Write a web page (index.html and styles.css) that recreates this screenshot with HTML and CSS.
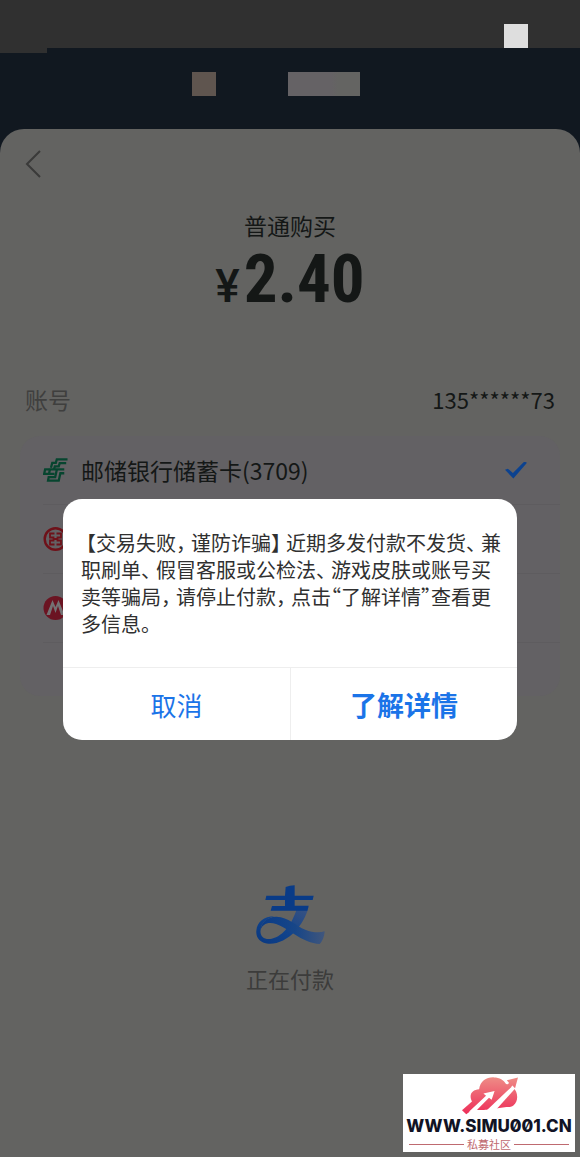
FILE: index.html
```html
<!DOCTYPE html>
<html lang="zh-CN">
<head>
<meta charset="utf-8">
<meta name="viewport" content="width=device-width, initial-scale=1">
<title>付款</title>
<link rel="stylesheet" href="styles.css">
</head>
<body>
<div class="screen">
  <div class="status"><span class="block block-light"></span></div>
  <div class="behind">
    <span class="notch"></span>
    <span class="block block-brown"></span>
    <span class="block block-gray"></span>
  </div>
  <main class="sheet">
    <button class="back" type="button" aria-label="返回">
      <svg viewBox="0 0 16 28" width="16" height="28"><path d="M15 1 2 14 15 27" fill="none" stroke="currentColor" stroke-width="2"/></svg>
    </button>
    <h1 class="title">普通购买</h1>
    <p class="amount"><span class="currency">¥</span>2.40</p>
    <div class="account"><span class="account-label">账号</span><span>135******73</span></div>
    <div class="cards">
      <label class="card">
        <svg class="bank" viewBox="21 24 76 74">
          <g fill="none" stroke="#07452f" stroke-width="7">
            <path d="M96 28H63L60 39H49L45 54"/>
            <path d="M92 40H72L69 50H57L54 60"/>
            <path d="M42 73H24L27 59H86"/>
            <path d="M86 71H74L69 94H36L38 83H58L63 60"/>
            <path d="M42 58 39 73H56"/>
          </g>
        </svg>
        <span class="card-name">邮储银行储蓄卡(3709)</span>
        <input class="check" type="radio" name="card" checked>
      </label>
      <label class="card">
        <svg class="bank" viewBox="0 0 24 24">
          <circle cx="12" cy="12" r="10.8" fill="none" stroke="#6e1119" stroke-width="2.4"/>
          <path d="M11 6.500H6.500V10.500H10V13.500H6.500V17.500H11M13 6.500H17.500V10.500H14V13.500H17.500V17.500H13M10 12H14" fill="none" stroke="#6e1119" stroke-width="1.8"/>
        </svg>
        <input class="check" type="radio" name="card">
      </label>
      <label class="card">
        <svg class="bank" viewBox="0 0 24 24">
          <circle cx="12" cy="12" r="12" fill="#6b1422"/>
          <path d="M3 19 9 4 12 11 15 4 21 19H17.500L14.500 10 12 17 9.500 10 6.500 19Z" fill="#747274"/>
        </svg>
        <input class="check" type="radio" name="card">
      </label>
    </div>
    <div class="paying">
      <svg class="pay-logo" viewBox="44 43 207 180">
        <defs>
          <linearGradient id="leg" x1="1" y1="0" x2="0" y2="1"><stop offset="0" stop-color="#3c5480"/><stop offset=".55" stop-color="#11438c"/><stop offset="1" stop-color="#093880"/></linearGradient>
          <linearGradient id="tail" x1="0" y1="0" x2="1" y2="0"><stop offset="0" stop-color="#093b87"/><stop offset=".55" stop-color="#174688"/><stop offset="1" stop-color="#40567c"/></linearGradient>
        </defs>
        <path d="M165 108H202C194 138 181 160 162 181C138 207 108 221 81 219C56 217 43 202 45 180C47 154 68 137 99 137C81 142 62 153 58 174C54 197 68 208 91 204C128 197 153 155 165 119Z" fill="url(#leg)"/>
        <path d="M56 183C58 157 78 137 106 138C141 139 164 166 192 177C213 186 235 187 250 182C249 198 243 213 235 220C211 219 184 207 158 190C130 171 91 145 68 163C61 168 58 175 56 183Z" fill="url(#tail)"/>
        <path d="M75 75H131L133 49Q145 44 160 44V75H217L214 88H160V105H202L198 120H88L92 106H131V88H72Z" fill="#093b87"/>
      </svg>
      <p class="paying-text">正在付款</p>
    </div>
  </main>

  <div class="overlay">
    <section class="dialog" role="dialog" aria-modal="true">
      <p class="message"><span class="open">【</span>交易失败<span class="mark">，</span>谨防诈骗<span class="mark">】</span>近期多发付款不发货<span class="mark">、</span>兼职刷单<span class="mark">、</span>假冒客服或公检法<span class="mark">、</span>游戏皮肤或账号买卖等骗局<span class="mark">，</span>请停止付款<span class="mark">，</span>点击<span class="quote">“</span>了解详情<span class="quote">”</span>查看更多信息。</p>
      <div class="actions">
        <button class="action" type="button">取消</button>
        <button class="action action-main" type="button">了解详情</button>
      </div>
    </section>
  </div>

  <aside class="badge">
    <svg class="cloud" viewBox="192 33 176 116">
      <defs><linearGradient id="pink" gradientUnits="userSpaceOnUse" x1="0" y1="36" x2="0" y2="145"><stop offset="0" stop-color="#ee8c86"/><stop offset="1" stop-color="#ee305a"/></linearGradient></defs>
      <path d="M228 113C213 91 224 73 247 72C250 48 269 35 292 36C309 36 322 44 328 55L350 66C367 82 366 110 351 121C345 125 338 126 330 126L270 134H238Z" fill="url(#pink)"/>
      <path d="M195 136 240 96 272 88 276 98 208 148Z" fill="url(#pink)"/>
      <path d="M268 138 348 62 357 69 301 131 294 138Z" fill="#fff"/>
      <path d="M331 45 365 36 356 69 348 61 262 135H240L338 53Z" fill="url(#pink)"/>
      <path d="M260 85 294 77 285 104 277 98 235 140H216L268 92Z" fill="#fff"/>
    </svg>
    <strong class="site">WWW.SIMU001.CN</strong>
    <span class="community">私募社区</span>
  </aside>
</div>
</body>
</html>
```

FILE: styles.css
```css
* { box-sizing: border-box; }

body {
  margin: 0;
  background: #111820;
  color: #141716;
  font-family: "Noto Sans CJK SC", sans-serif;
}

h1, p { margin: 0; font-weight: 400; }

button {
  padding: 0;
  border: 0;
  background: none;
  font: inherit;
  cursor: pointer;
}

.screen {
  position: relative;
  display: flex;
  flex-direction: column;
  min-height: 100vh;
}

.status {
  display: flex;
  justify-content: flex-end;
  align-items: flex-end;
  height: 48px;
  padding-right: 52px;
  background: #303030;
}

.behind {
  position: relative;
  display: flex;
  justify-content: center;
  gap: 72px;
  height: 81px;
  padding: 24px 28px 0 0;
}

.notch {
  position: absolute;
  top: 0;
  left: 0;
  width: 47px;
  height: 5px;
  background: #303030;
}

.block { width: 24px; height: 24px; }
.block-light { background: #dedede; }
.block-brown { background: #5f554f; }
.block-gray { width: 72px; background: linear-gradient(90deg, #656265 60%, #646462 70%); }

.sheet {
  flex: 1;
  display: flex;
  flex-direction: column;
  padding: 21px 20px 24px;
  border-radius: 24px 24px 0 0;
  background: #636361;
}

.back {
  align-self: flex-start;
  height: 28px;
  margin-left: 5px;
  color: #3a3a39;
}

.back svg { display: block; }

.title {
  margin-top: 31px;
  font-size: 23px;
  line-height: 32px;
  text-align: center;
}

.amount {
  height: 76px;
  font-family: "Roboto Condensed", Roboto, sans-serif;
  font-size: 67px;
  font-weight: 700;
  line-height: 76px;
  text-align: center;
}

.currency {
  margin-right: 4px;
  font-family: Roboto, sans-serif;
  font-size: 46px;
  font-weight: 500;
  line-height: 1;
}

.account {
  display: flex;
  justify-content: space-between;
  margin-top: 66px;
  padding: 0 5px;
  font-size: 22px;
  line-height: 32px;
}

.account-label { color: #3f3f3e; font-size: 23px; }

.cards {
  min-height: 260px;
  margin-top: 21px;
  border-radius: 20px;
  background: #636164;
}

.card {
  display: flex;
  align-items: center;
  height: 69px;
  margin-left: 23px;
  border-bottom: 1px solid #5e5c5f;
}

.bank { width: 25px; height: 24px; }

.card-name {
  margin-left: 13px;
  font-size: 23px;
  line-height: 32px;
}

.check {
  appearance: none;
  width: 22px;
  height: 17px;
  margin: 0 33px 0 auto;
}

.check:checked {
  background: #0c428f;
  clip-path: polygon(0 49%, 13% 42%, 36% 68%, 88% 0, 100% 7%, 38% 100%);
}

.paying {
  display: flex;
  flex-direction: column;
  align-items: center;
  gap: 17px;
  margin-top: 189px;
}

.pay-logo { width: 69px; height: 60px; }

.paying-text {
  color: #3c3c3b;
  font-size: 22px;
  line-height: 32px;
}

.overlay {
  position: absolute;
  inset: 0;
  display: grid;
  align-items: center;
  padding: 82px 63px 0;
}

.dialog {
  overflow: hidden;
  border-radius: 19px;
  background: #fff;
}

.message {
  padding: 30px 14px 30px 18px;
  color: #303030;
  font-size: 20px;
  line-height: 27px;
}

.open, .mark, .quote { font-feature-settings: "halt"; }
.open { margin-left: 5px; }
.mark { margin-right: 5px; }

.actions {
  display: grid;
  grid-template-columns: 1fr 1fr;
  border-top: 1px solid #eee;
}

.action {
  height: 72px;
  color: #1b74e8;
  font-size: 26px;
}

.action-main {
  border-left: 1px solid #eee;
  font-size: 27px;
  font-weight: 700;
}

.badge {
  position: absolute;
  right: 5px;
  bottom: 5px;
  display: flex;
  flex-direction: column;
  align-items: center;
  width: 172px;
  height: 78px;
  padding-top: 2px;
  background: #fff;
}

.cloud { width: 58px; height: 39px; margin-left: 2px; }

.site {
  color: #111325;
  font-family: Inter, "DejaVu Sans", sans-serif;
  font-size: 17px;
  font-weight: 800;
  font-feature-settings: "zero";
  line-height: 22px;
  white-space: nowrap;
}

.community {
  display: flex;
  align-items: center;
  gap: 3px;
  align-self: stretch;
  padding: 0 6px;
  color: #bf6a70;
  font-size: 11px;
  line-height: 14px;
}

.community::before, .community::after {
  content: "";
  flex: 1;
  height: 1px;
  background: #bf6a70;
}
```
